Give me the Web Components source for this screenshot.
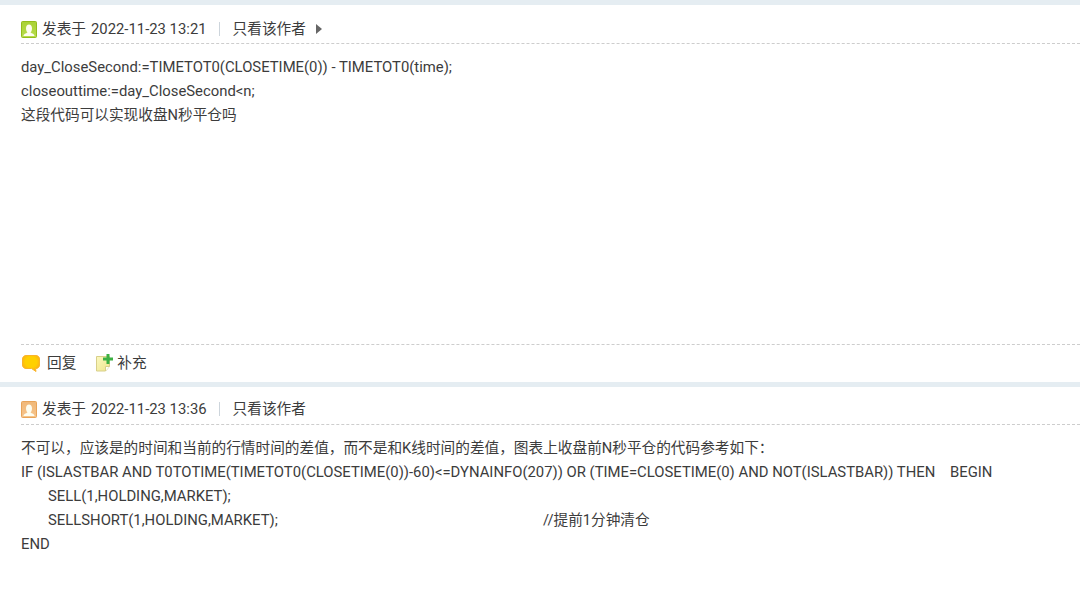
<!DOCTYPE html>
<html>
<head>
<meta charset="utf-8">
<title>帖子</title>
<style>
  html, body { margin: 0; background: #fff; overflow: hidden; }
  body { font: 14.85px/24px Roboto, "Noto Sans CJK SC", sans-serif; color: #3c3c3c; }
  .zh { font-size: 14.667px; }
  .in { padding-left: 27px; }
  .gap { display: inline-block; width: 495px; }
</style>
</head>
<body>
<forum-post color="green" time="2022-11-23 13:21" arrow actions body-height="300" head-height="39" head-pad="10">
  <div>day_CloseSecond:=TIMETOT0(CLOSETIME(0)) - TIMETOT0(time);</div>
  <div>closeouttime:=day_CloseSecond&lt;n;</div>
  <div class="zh">这段代码可以实现收盘N秒平仓吗</div>
</forum-post>
<forum-post color="orange" time="2022-11-23 13:36" body-height="170" head-height="38" head-pad="7">
  <div class="zh">不可以，应该是的时间和当前的行情时间的差值，而不是和K线时间的差值，图表上收盘前N秒平仓的代码参考如下：</div>
  <div>IF (ISLASTBAR AND T0TOTIME(TIMETOT0(CLOSETIME(0))-60)&lt;=DYNAINFO(207)) OR (TIME=CLOSETIME(0) AND NOT(ISLASTBAR)) THEN &nbsp; &nbsp;BEGIN</div>
  <div class="in">SELL(1,HOLDING,MARKET);</div>
  <div class="in"><span class="gap">SELLSHORT(1,HOLDING,MARKET);</span><span class="zh">//提前1分钟清仓</span></div>
  <div>END</div>
</forum-post>
<script>
class UserIcon extends HTMLElement {
  connectedCallback() {
    const orange = this.getAttribute("color") === "orange";
    const edge = orange ? "#e8a458" : "#93bd1c";
    const top = orange ? "#f0b878" : "#a9d234";
    const bottom = orange ? "#f6c48c" : "#b8dc4e";
    const id = orange ? "ua" : "ub";
    this.attachShadow({ mode: "open" }).innerHTML = `
      <style>:host { display: block; width: 16px; height: 17px; } svg { display: block; }</style>
      <svg width="16" height="17" viewBox="0 0 16 17">
        <defs><linearGradient id="${id}" x1="0" y1="0" x2="0" y2="1"><stop offset="0" stop-color="${top}"/><stop offset="1" stop-color="${bottom}"/></linearGradient></defs>
        <rect x=".5" y=".5" width="15" height="16" rx="1" fill="url(#${id})" stroke="${edge}"/>
        <path d="M2.500 15c0-2.200 2.500-2.700 4-3.600-1-1-1.500-2.200-1.500-4.200C5 5 6.200 3.500 8 3.500s3 1.500 3 3.700c0 2-.5 3.200-1.500 4.200 1.500.9 4 1.400 4 3.600z" fill="#fdfdf0"/>
      </svg>`;
  }
}
customElements.define("user-icon", UserIcon);

class PostActions extends HTMLElement {
  connectedCallback() {
    this.attachShadow({ mode: "open" }).innerHTML = `
      <style>
        :host { display: flex; align-items: center; height: 36px; margin-left: 21px; padding-bottom: 1px; border-top: 1px dashed #cdcdcd; font-size: 14.667px; }
        span { display: flex; align-items: center; }
        .reply { gap: 7px; margin: 0 20px 0 1px; }
        .add { gap: 3px; }
      </style>
      <span class="reply">
        <svg width="18" height="17" viewBox="0 0 18 17">
          <defs><radialGradient id="bub" cx=".5" cy=".4" r=".6"><stop offset=".55" stop-color="#ffd000"/><stop offset="1" stop-color="#fbab1c"/></radialGradient></defs>
          <path d="M4 .5h10c2 0 3.500 1.500 3.500 3.500v6c0 2-1.500 3.500-3.500 3.500h-.5l.5 3-4.500-3H4C2 13.500.5 12 .5 10V4C.5 2 2 .5 4 .5z" fill="url(#bub)" stroke="#fab42a"/>
        </svg>回复
      </span>
      <span class="add">
        <svg width="18" height="18" viewBox="0 0 18 18">
          <defs><linearGradient id="page" x1="0" y1="0" x2="1" y2="1"><stop offset="0" stop-color="#fbf8c0"/><stop offset="1" stop-color="#efe68c"/></linearGradient></defs>
          <path d="M.5 2.500h13v10l-4 4.500h-9z" fill="url(#page)" stroke="#d8cf8a"/>
          <path d="M9.500 17v-4.500h4" fill="#fff" stroke="#d8cf8a"/>
          <path d="M10.500 0h3v3.500H17v3h-3.500V10h-3V6.500H7v-3h3.500z" fill="#3cb043"/>
        </svg>补充
      </span>`;
  }
}
customElements.define("post-actions", PostActions);

class ForumPost extends HTMLElement {
  connectedCallback() {
    const color = this.getAttribute("color");
    const time = this.getAttribute("time");
    const arrow = this.hasAttribute("arrow")
      ? `<svg class="arrow" width="6" height="10" viewBox="0 0 6 10"><path d="M0 0l6 5-6 5z" fill="#666"/></svg>`
      : "";
    const actions = this.hasAttribute("actions") ? "<post-actions></post-actions>" : "";
    this.attachShadow({ mode: "open" }).innerHTML = `
      <style>
        :host { display: block; }
        .band { background: #e5edf2; height: 5px; }
        header { display: flex; align-items: center; height: ${this.getAttribute("head-height")}px; box-sizing: border-box; padding-top: ${this.getAttribute("head-pad")}px; margin-left: 21px; border-bottom: 1px dashed #cdcdcd; }
        header > * { flex: none; }
        user-icon { margin-right: 5px; margin-top: 1px; }
        .zh { font-size: 14.667px; margin-right: 5px; }
        .pipe { width: 1px; height: 14px; background: #cdd5dc; margin: 0 13px 0 12px; }
        .arrow { margin-left: 10px; }
        .body { padding: 11px 0 0 21px; height: ${this.getAttribute("body-height")}px; box-sizing: border-box; white-space: nowrap; }
      </style>
      <div class="band"></div>
      <header>
        <user-icon color="${color}"></user-icon>
        <span class="zh">发表于</span><span>${time}</span>
        <span class="pipe"></span>
        <span class="zh" style="margin:0">只看该作者</span>
        ${arrow}
      </header>
      <div class="body"><slot></slot></div>
      ${actions}`;
  }
}
customElements.define("forum-post", ForumPost);
</script>
</body>
</html>
